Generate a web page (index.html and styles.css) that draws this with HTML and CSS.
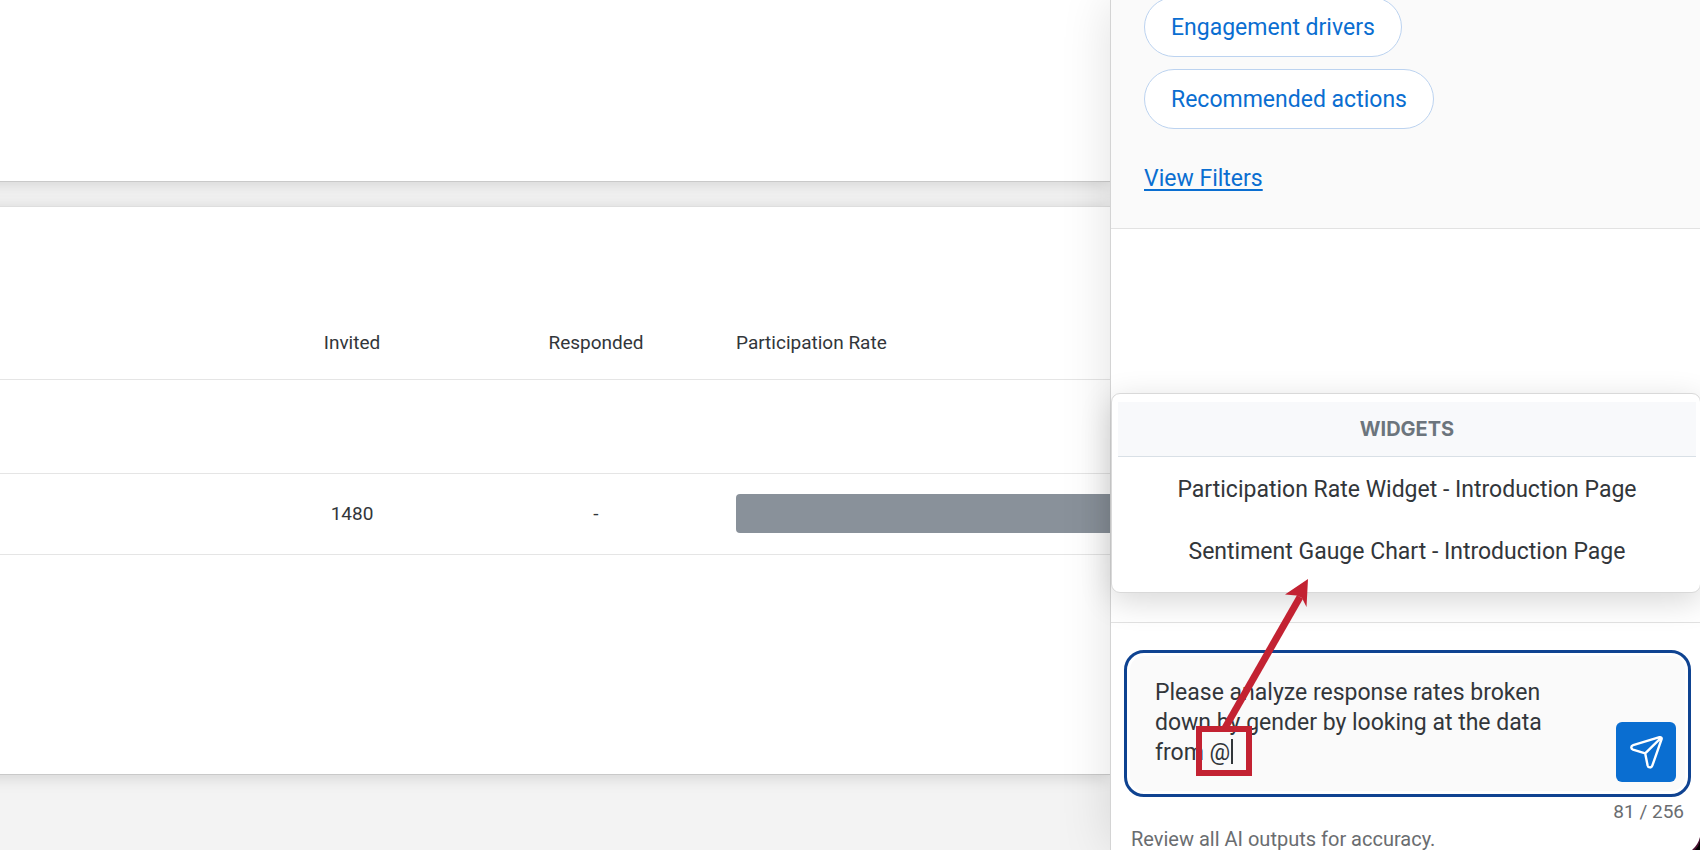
FILE: index.html
```
<!DOCTYPE html>
<html lang="en">
<head>
<meta charset="utf-8">
<title>Participation report</title>
<link rel="stylesheet" href="styles.css">
</head>
<body>
<div class="app">
  <main class="report">
    <section class="card card-summary"></section>
    <section class="card card-rates">
      <table class="rates">
        <colgroup><col class="col-name"><col class="col-num"><col class="col-num"><col></colgroup>
        <thead>
          <tr><th></th><th>Invited</th><th>Responded</th><th class="left">Participation Rate</th></tr>
        </thead>
        <tbody>
          <tr class="row-group"><td></td><td></td><td></td><td></td></tr>
          <tr class="row-data"><td></td><td>1480</td><td>-</td><td class="cell-bar"><div class="bar"></div></td></tr>
        </tbody>
      </table>
    </section>
  </main>

  <aside class="panel">
    <section class="intro">
      <div class="chips">
        <button class="chip" type="button">Engagement drivers</button>
        <button class="chip" type="button">Recommended actions</button>
      </div>
      <a class="filters" href="#filters">View Filters</a>
    </section>
    <div class="thread"></div>
    <form class="composer">
      <div class="mentions">
        <h2 class="mentions-title">WIDGETS</h2>
        <button class="mention" type="button">Participation Rate Widget - Introduction Page</button>
        <button class="mention" type="button">Sentiment Gauge Chart - Introduction Page</button>
      </div>
      <div class="field">
        <div class="field-inner">
          <textarea class="prompt" rows="3" aria-label="Message">Please analyze response rates broken
down by gender by looking at the data
from @</textarea>
          <button class="send" type="button" aria-label="Send">
            <svg viewBox="0 0 60 60" fill="none" stroke="#fff" stroke-width="2.4" stroke-linejoin="round" stroke-linecap="round"><path d="M43.5 15.2 17.2 23.2C14.7 24 14.7 26.8 17 27.6L29.2 31.4 31.6 43.4C32.2 46 35.4 46.1 36.3 43.7L45.6 17.2C46 15.8 45 14.8 43.5 15.2ZM29.2 31.4 45 15.8"/></svg>
          </button>
        </div>
        <svg class="callout" viewBox="0 0 140 210" fill="none">
          <path d="M35 155 110 24" stroke="#c32232" stroke-width="7"/>
          <path d="M118 6 95 21.500 106.500 22.500 112 25 116.500 34Z" fill="#c32232"/>
          <rect x="9" y="156" width="50" height="44" stroke="#c32232" stroke-width="6"/>
          <path d="M42 166V191" stroke="#32363a" stroke-width="2"/>
        </svg>
      </div>
      <div class="counter">81 / 256</div>
      <p class="note">Review all AI outputs for accuracy.</p>
    </form>
    <svg class="corner" viewBox="0 0 8 13"><path d="M8 0Q6 8 0 13H8Z" fill="#4a1030"/><path d="M8 4Q7 9 3 13H8Z" fill="#000"/></svg>
  </aside>
</div>
</body>
</html>
```
FILE: styles.css
```
* { box-sizing: border-box; }
body {
  margin: 0;
  background: #f3f3f3;
  color: #32363a;
  font-family: Roboto, "Liberation Sans", sans-serif;
}
button, textarea { font: inherit; color: inherit; }
.app {
  display: grid;
  grid-template-columns: minmax(0, 1fr) 590px;
  height: 100vh;
  overflow: hidden;
}
.report {
  display: flex;
  flex-direction: column;
  gap: 24px;
  min-width: 0;
  margin-left: -24px;
}
.card {
  padding-left: 24px;
  background: #fff;
  border-top: 1px solid #dedede;
  border-bottom: 1px solid #c9c9c9;
  box-shadow: 0 2px 16px rgba(0, 0, 0, .14);
}
.card-summary { height: 182px; border-top: 0; }
.card-rates { padding-top: 98px; padding-bottom: 219px; }
.rates {
  width: 100%;
  table-layout: fixed;
  border-collapse: separate;
  border-spacing: 0;
  font-size: 19px;
}
.col-name { width: 230px; }
.col-num { width: 244px; }
.rates th, .rates td {
  padding: 0;
  border-bottom: 1px solid #e5e5e5;
  font-weight: 400;
  text-align: center;
}
.rates th { height: 75px; }
.rates th.left { padding-left: 18px; text-align: left; }
.row-group td { height: 94px; }
.row-data td { height: 81px; padding-bottom: 2px; }
.rates .cell-bar { padding-left: 18px; }
.bar {
  height: 39px;
  border-radius: 4px 0 0 4px;
  background: #89919a;
}
.panel {
  position: relative;
  display: flex;
  flex-direction: column;
  height: 100vh;
  border-left: 1px solid #d4d4d4;
  background: #fff;
  box-shadow: 0 0 48px rgba(0, 0, 0, .12);
  font-size: 23px;
}
.intro {
  margin-top: -3px;
  padding: 0 33px 34px;
  border-bottom: 1px solid #e2e2e2;
  background: #fafafa;
}
.chips {
  display: flex;
  flex-direction: column;
  align-items: flex-start;
  gap: 12px;
  margin-bottom: 35px;
}
.chip {
  height: 60px;
  padding: 0 26px;
  border: 1px solid #bcd3f0;
  border-radius: 30px;
  background: #fff;
  color: #0a6ed1;
}
.filters {
  display: inline-block;
  line-height: 30px;
  color: #0a6ed1;
  text-decoration-thickness: 2px;
  text-underline-offset: 3px;
}
.thread { flex: 1; }
.composer {
  position: relative;
  padding: 27px 9px 0 13px;
  border-top: 1px solid #e2e2e2;
}
.mentions {
  position: absolute;
  bottom: 257px;
  left: 0;
  right: -1px;
  display: flex;
  flex-direction: column;
  padding: 8px 4px 10px 6px;
  border: 1px solid #d9d9d9;
  border-radius: 9px;
  background: #fff;
  box-shadow: 0 8px 32px rgba(0, 0, 0, .16);
}
.mentions-title {
  margin: 0 0 1px;
  border-bottom: 1px solid #d9e0e6;
  background: #f8f9fb;
  color: #6c757d;
  font-family: Inter, Roboto, sans-serif;
  font-size: 20px;
  font-weight: 700;
  line-height: 54px;
  text-align: center;
}
.mention {
  height: 62px;
  padding: 0;
  border: 0;
  background: none;
}
.field {
  position: relative;
  padding: 3px;
  border: 3px solid #0f4391;
  border-radius: 20px;
  background: #fff;
}
.field-inner {
  display: flex;
  align-items: flex-end;
  padding: 22px 9px 9px 25px;
  border-radius: 14px;
  background: #fafafa;
}
.prompt {
  flex: 1;
  min-width: 0;
  height: 104px;
  padding: 0;
  border: 0;
  outline: 0;
  background: none;
  line-height: 30px;
  resize: none;
  overflow: hidden;
}
.send {
  width: 60px;
  height: 60px;
  padding: 0;
  border: 0;
  border-radius: 6px;
  background: #0a6ed1;
}
.send svg { display: block; }
.callout {
  position: absolute;
  left: 63px;
  bottom: 11px;
  width: 140px;
  height: 210px;
  pointer-events: none;
}
.counter {
  padding: 3px 7px 0 0;
  color: #6a6d70;
  font-size: 19px;
  line-height: 24px;
  text-align: right;
}
.note {
  margin: 4px 0 0 7px;
  color: #6a6d70;
  font-size: 20px;
  line-height: 22px;
}
.corner {
  position: absolute;
  right: 0;
  bottom: 0;
  width: 8px;
  height: 13px;
}
```
